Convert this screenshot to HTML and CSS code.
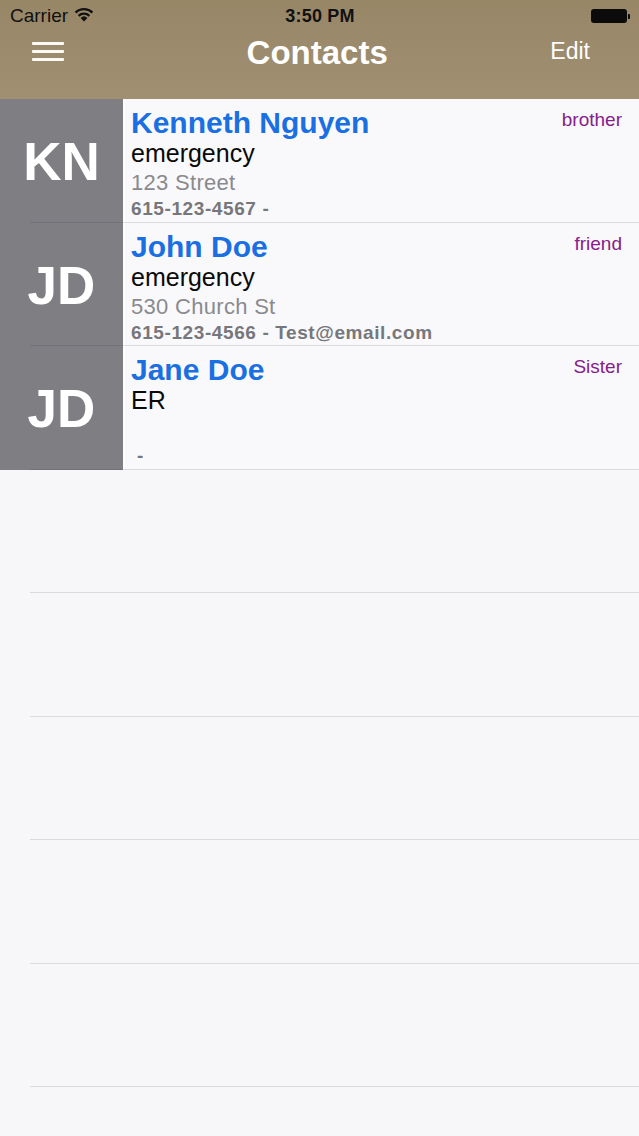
FILE: index.html
```html
<!DOCTYPE html>
<html>
<head>
<meta charset="utf-8">
<link rel="stylesheet" href="styles.css">
</head>
<body>
<header class="topbar">
  <div class="statusbar">
    <div class="carrier">Carrier
      <svg class="wifi" width="20" height="15" viewBox="0 0 20 15">
        <path d="M10 14.5 L6.6 10.9 A5 5 0 0 1 13.4 10.9 Z" fill="#111"/>
        <path d="M4.6 8.8 A7.8 7.8 0 0 1 15.4 8.8" stroke="#111" stroke-width="2.3" fill="none"/>
        <path d="M1.6 5.6 A12 12 0 0 1 18.4 5.6" stroke="#111" stroke-width="2.3" fill="none"/>
      </svg>
    </div>
    <div class="time">3:50 PM</div>
    <div class="battery"><span class="batt-body"></span><span class="batt-tip"></span></div>
  </div>
  <nav class="navbar">
    <div class="menu"><span></span><span></span><span></span></div>
    <div class="title">Contacts</div>
    <div class="edit">Edit</div>
  </nav>
</header>
<main class="list">
  <div class="row">
    <div class="avatar">KN</div>
    <div class="info">
      <div class="top"><span class="name">Kenneth Nguyen</span><span class="rel">brother</span></div>
      <div class="group">emergency</div>
      <div class="addr">123 Street</div>
      <div class="contact">615-123-4567 -</div>
    </div>
  </div>
  <div class="row alt">
    <div class="avatar">JD</div>
    <div class="info">
      <div class="top"><span class="name">John Doe</span><span class="rel">friend</span></div>
      <div class="group">emergency</div>
      <div class="addr">530 Church St</div>
      <div class="contact">615-123-4566 - Test@email.com</div>
    </div>
  </div>
  <div class="row">
    <div class="avatar">JD</div>
    <div class="info">
      <div class="top"><span class="name">Jane Doe</span><span class="rel">Sister</span></div>
      <div class="group">ER</div>
      <div class="addr">&nbsp;</div>
      <div class="contact">&nbsp;-</div>
    </div>
  </div>
  <div class="row alt empty"></div>
  <div class="row empty"></div>
  <div class="row alt empty"></div>
  <div class="row empty"></div>
  <div class="row alt empty"></div>
</main>
</body>
</html>
```
FILE: styles.css
```css
* { box-sizing: border-box; }
html, body { margin: 0; padding: 0; }
body {
  width: 639px;
  height: 1136px;
  overflow: hidden;
  background: #f7f7f9;
  font-family: "Liberation Sans", Arial, sans-serif;
}
.topbar {
  height: 99px;
  background: linear-gradient(#978767, #a08f71);
  display: flex;
  flex-direction: column;
}
.statusbar {
  height: 32px;
  display: flex;
  align-items: center;
  justify-content: space-between;
  padding: 0 9px 0 10px;
  color: #111;
  position: relative;
}
.carrier {
  font-size: 19px;
  display: flex;
  align-items: center;
  gap: 6px;
  flex: 1;
}
.wifi { margin-top: -3px; }
.time {
  font-size: 18px;
  font-weight: bold;
  flex: 1;
  text-align: center;
  letter-spacing: 0.2px;
}
.battery {
  flex: 1;
  display: flex;
  justify-content: flex-end;
  align-items: center;
}
.batt-body {
  width: 36px;
  height: 14px;
  background: #0b0b0b;
  border-radius: 3px;
}
.batt-tip {
  width: 2px;
  height: 5px;
  background: #0b0b0b;
  margin-left: 1px;
  border-radius: 0 1px 1px 0;
}
.navbar {
  height: 42px;
  display: flex;
  align-items: center;
  justify-content: space-between;
  padding: 0 49px 0 32px;
  color: #fff;
}
.menu {
  width: 32px;
  display: flex;
  flex-direction: column;
  gap: 5px;
  margin-top: -4px;
}
.menu span {
  display: block;
  height: 3px;
  background: #fbfaf4;
  border-radius: 1px;
}
.title {
  font-size: 33px;
  font-weight: bold;
  margin-left: 20px;
}
.edit {
  font-size: 23px;
  margin-top: -4px;
}
.list { display: flex; flex-direction: column; }
.row {
  height: 123.5px;
  display: flex;
  position: relative;
}
.row::after {
  content: "";
  position: absolute;
  left: 30px;
  right: 0;
  bottom: 0;
  height: 1px;
  background: rgba(60, 60, 80, 0.16);
}
.avatar {
  width: 125px;
  background: #7f7e83;
  color: #fff;
  font-size: 53px;
  font-weight: bold;
  display: flex;
  align-items: center;
  justify-content: center;
  padding-top: 2px;
  border-right: 2px solid #fcfcfd;
  flex: none;
}
.info {
  flex: 1;
  background: #f9f9fb;
  padding: 6px 17px 0 6px;
  display: flex;
  flex-direction: column;
}
.top {
  display: flex;
  justify-content: space-between;
  align-items: flex-start;
}
.name {
  color: #1a6fe2;
  font-size: 30px;
  font-weight: bold;
  line-height: 36px;
}
.rel {
  color: #86208a;
  font-size: 19px;
  line-height: 24px;
  margin-top: 3px;
}
.group {
  color: #0a0a0a;
  font-size: 25px;
  line-height: 29px;
  margin-top: -2px;
}
.addr {
  color: #8a8a8e;
  font-size: 22px;
  line-height: 29px;
  letter-spacing: 0.3px;
}
.contact {
  color: #77777b;
  font-size: 19px;
  font-weight: bold;
  line-height: 24px;
  letter-spacing: 0.6px;
}
```
